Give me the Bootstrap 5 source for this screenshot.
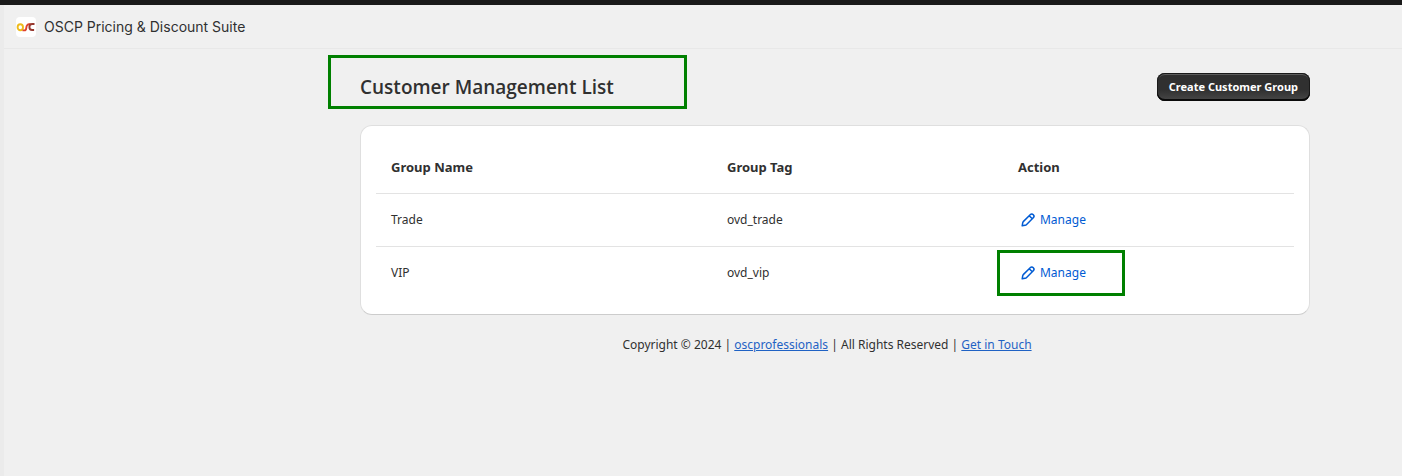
<!DOCTYPE html>
<html lang="en">
<head>
<meta charset="utf-8">
<meta name="viewport" content="width=device-width, initial-scale=1">
<title>OSCP Pricing &amp; Discount Suite</title>
<link href="https://cdn.jsdelivr.net/npm/bootstrap@5.3.0/dist/css/bootstrap.min.css" rel="stylesheet">
<style>
  body { background: #f0f0f0; color: #303030; font-family: "Noto Sans", "Open Sans", sans-serif; font-size: 12px; line-height: 20px; }
  .top-strip { height: 5px; background: #1a1a1a; }
  .side-edge { width: 4px; background: #ebebeb; }
  .app-bar { height: 44px; padding-left: 12px; border-bottom: 1px solid #e8e8e8; font-family: Inter, sans-serif; font-size: 14px; }
  .app-logo { width: 20px; height: 20px; }
  .side-space { width: 264px; }
  .page-area { max-width: 950px; }
  .page-head { height: 76px; }
  .page-title { font-family: "Open Sans", sans-serif; font-size: 19px; line-height: 24px; font-weight: 650; }
  .btn-create { height: 28px; padding: 0 12px; border: 0; border-radius: 8px; color: #fff; font-size: 11px; font-weight: 700; line-height: 20px;
    background: linear-gradient(180deg, #303030 60%, #484848);
    box-shadow: inset 0 -2px 0 #0a0a0a, inset 0 0 0 1px #1a1a1a, inset 0 2px 0 #5c5c5c; }
  .btn-create:hover { color: #fff; background: #1a1a1a; }
  .group-card { border: 1px solid #dfdfdf; border-bottom-color: #ccc; border-radius: 12px; padding: 15px; background: #fff; }
  .group-table { color: #303030; table-layout: fixed; }
  .group-table > :not(caption) > * > * { padding: 16px 15px; border-bottom: 1px solid #e3e3e3; background: transparent; color: inherit; }
  .group-table > tbody > tr:last-child > * { border-bottom: 0; }
  .group-table th { font-size: 13px; font-weight: 700; }
  .col-name { width: 36.6%; }
  .col-tag { width: 31.7%; }
  .manage-link { color: #005bd3; gap: 2px; }
  .foot-link { color: #1f62c4; }
  .mark-frame { position: absolute; border: 3px solid #008000; pointer-events: none; }
  .frame-title { left: -32px; top: -20px; width: 359px; height: 54px; }
  .frame-action { left: -21px; top: -13px; width: 128px; height: 46px; }
</style>
</head>
<body>
<div class="d-flex flex-column min-vh-100">
  <div class="top-strip"></div>
  <div class="d-flex flex-grow-1">
    <div class="side-edge flex-shrink-0"></div>
    <div class="flex-grow-1">
      <header class="app-bar d-flex align-items-center gap-2">
        <svg class="app-logo" viewBox="0 0 20 20" role="img" aria-label="OSC logo">
          <rect width="20" height="20" rx="4" fill="#fff"/>
          <g fill="none" stroke-width="1.9">
            <ellipse cx="4.300" cy="10.300" rx="2.700" ry="3" stroke="#eebb1c"/>
            <path d="M6.500 13.400h2c2.500 0 1.300-3 2.400-4.900.7-1.300 1.600-1.500 3.600-1.500" stroke="#e0402c"/>
            <path d="M18.500 7h-2.400c-3.600 0-3.600 6 0 6h2" stroke="#96382f"/>
          </g>
        </svg>
        <span>OSCP Pricing &amp; Discount Suite</span>
      </header>
      <div class="d-flex">
        <div class="side-space flex-shrink-0"></div>
        <main class="page-area flex-grow-1 mx-auto">
          <div class="page-head d-flex align-items-center justify-content-between">
            <div class="position-relative">
              <h1 class="page-title mb-0">Customer Management List</h1>
              <span class="mark-frame frame-title"></span>
            </div>
            <button type="button" class="btn btn-create">Create Customer Group</button>
          </div>
          <section class="group-card">
            <table class="table group-table mb-0">
              <thead>
                <tr><th scope="col" class="col-name">Group Name</th><th scope="col" class="col-tag">Group Tag</th><th scope="col">Action</th></tr>
              </thead>
              <tbody>
                <tr>
                  <td>Trade</td><td>ovd_trade</td>
                  <td><a href="#" class="manage-link d-inline-flex align-items-center text-decoration-none align-top">
                    <svg width="20" height="20" viewBox="0 0 20 20" fill="none" stroke="currentColor" stroke-width="1.500" stroke-linejoin="round" aria-hidden="true"><path d="M4.200 15.800l.5-2.900c.1-.6.4-1.100.8-1.500l6.700-6.700c.9-.9 2.200-.9 3.100 0s.9 2.200 0 3.100l-6.700 6.700c-.4.4-.9.700-1.500.8zM11.200 5.700l3.100 3.100"/></svg>
                    <span>Manage</span></a></td>
                </tr>
                <tr>
                  <td>VIP</td><td>ovd_vip</td>
                  <td><div class="position-relative"><a href="#" class="manage-link d-inline-flex align-items-center text-decoration-none align-top">
                    <svg width="20" height="20" viewBox="0 0 20 20" fill="none" stroke="currentColor" stroke-width="1.500" stroke-linejoin="round" aria-hidden="true"><path d="M4.200 15.800l.5-2.900c.1-.6.4-1.100.8-1.500l6.700-6.700c.9-.9 2.200-.9 3.100 0s.9 2.200 0 3.100l-6.700 6.700c-.4.4-.9.700-1.500.8zM11.200 5.700l3.100 3.100"/></svg>
                    <span>Manage</span></a>
                    <span class="mark-frame frame-action"></span></div></td>
                </tr>
              </tbody>
            </table>
          </section>
          <footer class="text-center pe-3 mt-3 pt-1">Copyright © 2024 | <a href="#" class="foot-link">oscprofessionals</a> | All Rights Reserved | <a href="#" class="foot-link">Get in Touch</a></footer>
        </main>
      </div>
    </div>
  </div>
</div>
<script src="https://cdn.jsdelivr.net/npm/bootstrap@5.3.0/dist/js/bootstrap.bundle.min.js"></script>
</body>
</html>
